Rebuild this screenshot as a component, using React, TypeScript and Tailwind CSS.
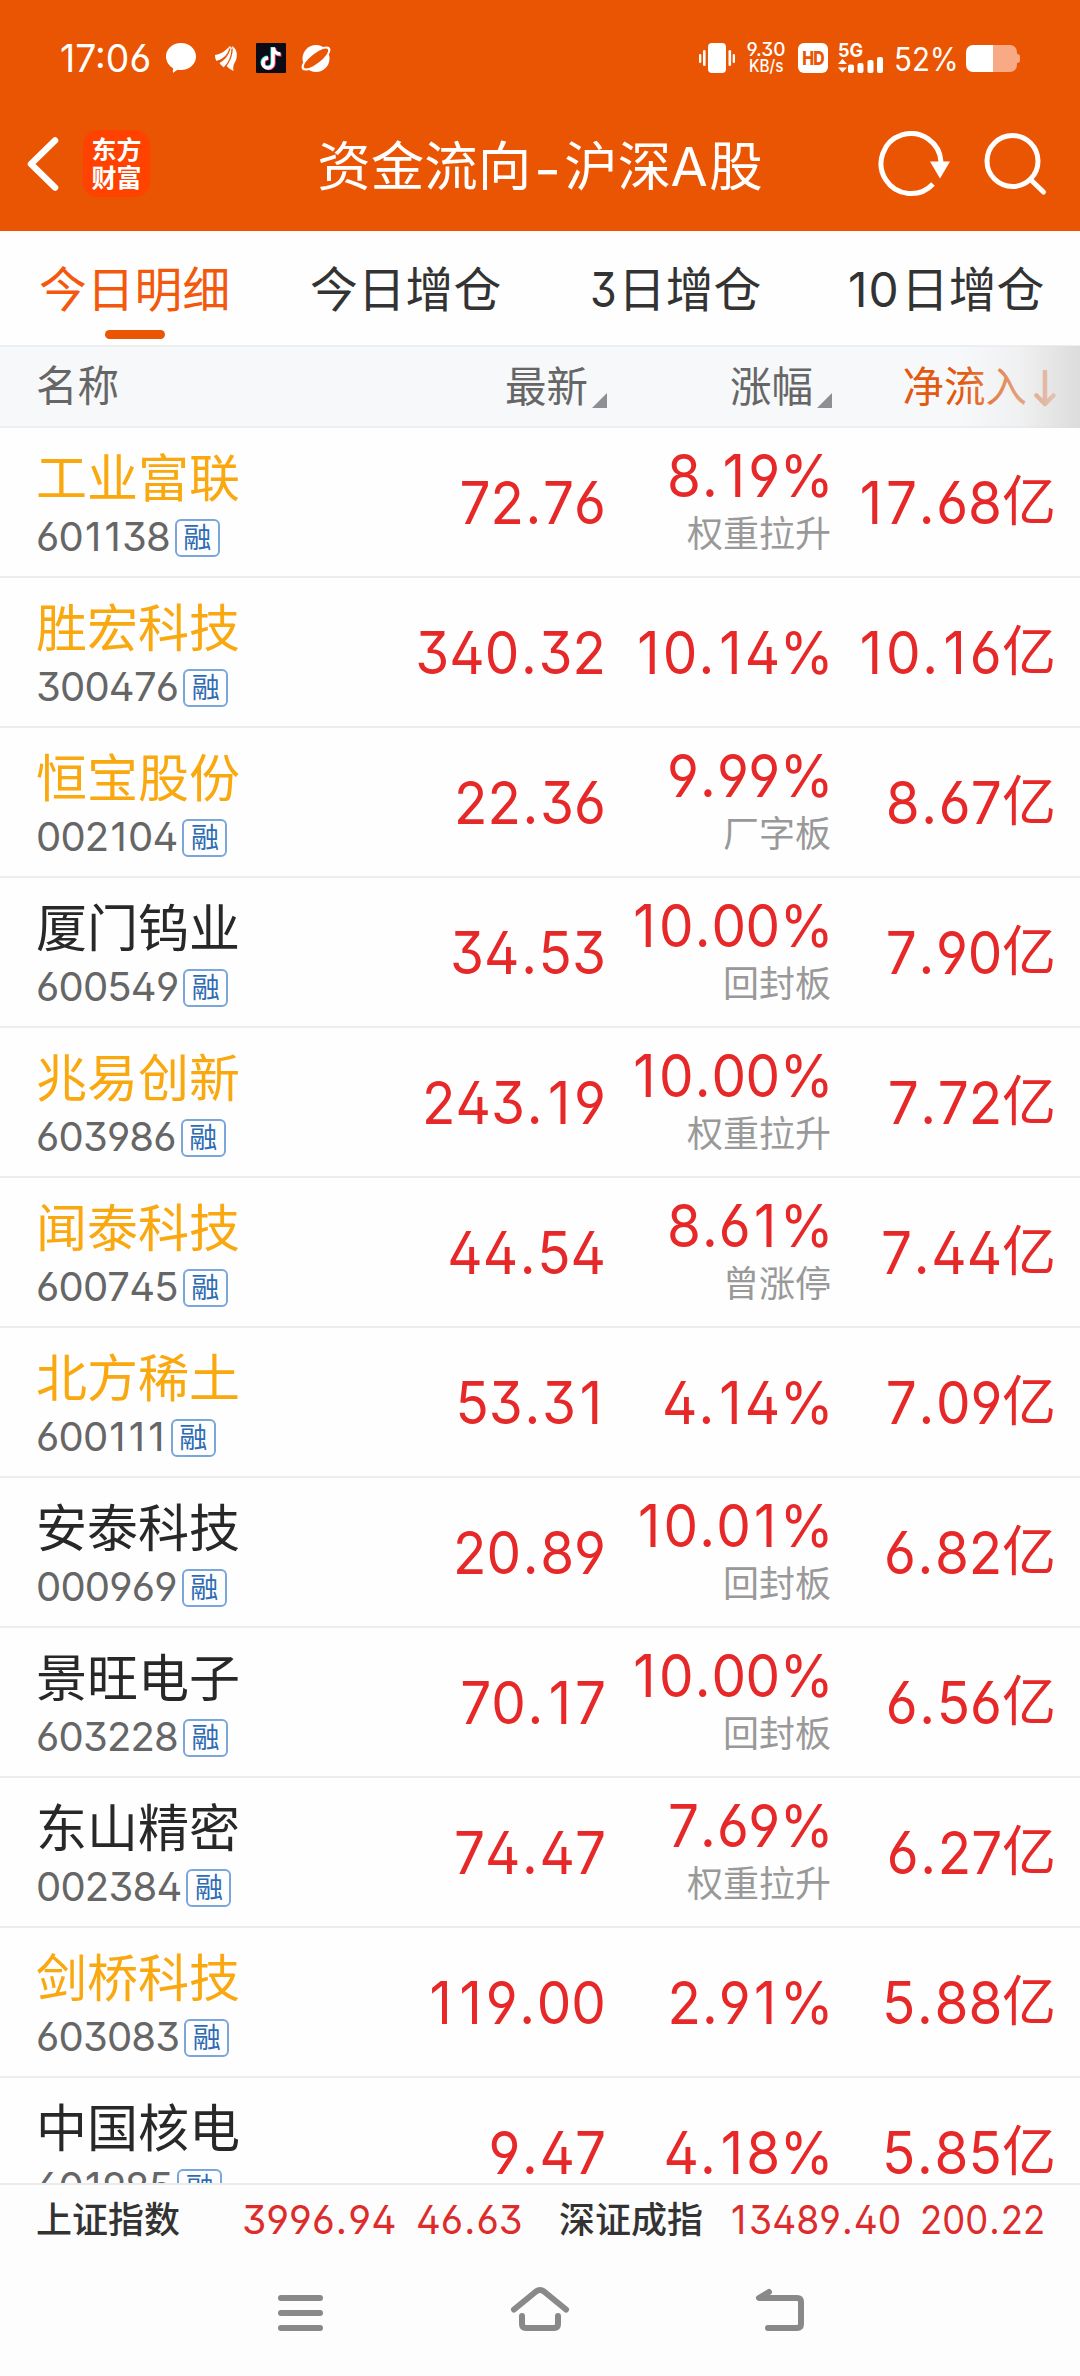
import React from "react";

const FONT = "font-['Inter','Noto_Sans_CJK_SC',sans-serif]";

type Stock = {
  name: string;
  code: string;
  hot?: boolean;
  price: string;
  change: string;
  tag?: string;
  inflow: string;
};

const stocks: Stock[] = [
  { name: "工业富联", code: "601138", hot: true, price: "72.76", change: "8.19%", tag: "权重拉升", inflow: "17.68" },
  { name: "胜宏科技", code: "300476", hot: true, price: "340.32", change: "10.14%", inflow: "10.16" },
  { name: "恒宝股份", code: "002104", hot: true, price: "22.36", change: "9.99%", tag: "厂字板", inflow: "8.67" },
  { name: "厦门钨业", code: "600549", price: "34.53", change: "10.00%", tag: "回封板", inflow: "7.90" },
  { name: "兆易创新", code: "603986", hot: true, price: "243.19", change: "10.00%", tag: "权重拉升", inflow: "7.72" },
  { name: "闻泰科技", code: "600745", hot: true, price: "44.54", change: "8.61%", tag: "曾涨停", inflow: "7.44" },
  { name: "北方稀土", code: "600111", hot: true, price: "53.31", change: "4.14%", inflow: "7.09" },
  { name: "安泰科技", code: "000969", price: "20.89", change: "10.01%", tag: "回封板", inflow: "6.82" },
  { name: "景旺电子", code: "603228", price: "70.17", change: "10.00%", tag: "回封板", inflow: "6.56" },
  { name: "东山精密", code: "002384", price: "74.47", change: "7.69%", tag: "权重拉升", inflow: "6.27" },
  { name: "剑桥科技", code: "603083", hot: true, price: "119.00", change: "2.91%", inflow: "5.88" },
  { name: "中国核电", code: "601985", price: "9.47", change: "4.18%", inflow: "5.85" },
];

// Figures with extra air around the narrow "1" and the decimal point.
function Num({ value, className, one = "mx-[0.07em]" }: { value: string; className: string; one?: string }) {
  return (
    <span className={`whitespace-nowrap [font-kerning:none] ${className}`}>
      {value.split(/([1.])/).map((part, i) =>
        part === "1" ? (
          <span key={i} className={one}>1</span>
        ) : part === "." ? (
          <span key={i} className="mx-[0.03em]">.</span>
        ) : (
          part
        ),
      )}
    </span>
  );
}

function StatusBar() {
  return (
    <div className="flex h-[116px] items-center pl-[60px] pr-[60px] text-white">
      <span className="w-[106px] origin-left scale-x-[0.97] text-[38.5px] leading-none whitespace-nowrap">17:06</span>
      <svg className="-ml-px h-[30px] w-[172px] shrink-0" viewBox="165 43 172 30" fill="#fff">
        <path d="M181 43c8.500 0 15 6 15 13.600S189.500 70 181 70c-1.200 0-2.300-.1-3.400-.3-1.500 1-3 2-4.600 3.300-.3-1.600-.2-3 .2-4.600C169 66 166 61.600 166 56.600 166 49 172.500 43 181 43z" />
        <path d="M215 55c7-1 11-5 15-9 .5 7-5 14-13.500 15-1-1.500-1.500-3.500-1.500-6z" />
        <path d="M219.500 63c7-3.500 10-10 11-17 4 4 .5 16-6.500 21.500-1.500-1-3.500-2.800-4.500-4.500z" />
        <path d="M226 65c5-5 7.500-12 6-19 6 3 6 12 2.500 17-1.500 3-1.500 5-1 8-3-1.500-6-3.500-7.500-6z" />
        <path d="M217 61.500c6-1.500 11-6 13-13M224 68c5-5 8-11 8-19" fill="none" stroke="#ea5504" strokeWidth="1.200" />
        <rect x="256" y="43" width="30" height="30" rx="1" fill="#0b0b16" />
        <path d="M272.500 47v15.500a5 5 0 1 1-5-5M273 47c0 4 3 7 7 7" fill="none" stroke="#25f4ee" strokeWidth="4" />
        <path d="M274 48v15.500a5 5 0 1 1-5-5M274.500 48c0 4 3 7 7 7" fill="none" stroke="#fe2c55" strokeWidth="3.500" />
        <path d="M273 47.500V63a5 5 0 1 1-5-5M273.500 47.500c0 4 3 6.500 7 6.500" fill="none" stroke="#fff" strokeWidth="3.500" />
        <circle cx="316" cy="58.500" r="13.500" />
        <ellipse cx="316" cy="58.500" rx="17.500" ry="6.800" transform="rotate(-38 316 58.500)" />
        <ellipse cx="316" cy="58.500" rx="15" ry="4.800" transform="rotate(-38 316 58.500)" fill="#ea5504" />
      </svg>
      <div className="flex-1" />
      <svg className="h-[30px] w-[37px] shrink-0" viewBox="698 43 37 30" fill="#fff">
        <rect x="707" y="43" width="18" height="30" rx="4" />
        <rect x="702" y="50" width="2.600" height="16" rx="1.300" />
        <rect x="698" y="54" width="2.300" height="9" rx="1.100" />
        <rect x="727.500" y="50" width="2.600" height="16" rx="1.300" />
        <rect x="731.700" y="54" width="2.300" height="9" rx="1.100" />
      </svg>
      <div className="ml-2.5 flex w-[40px] flex-col items-center text-[19px] font-medium leading-[16px]">
        <span>9.30</span>
        <span className="text-[17px] scale-x-90">KB/s</span>
      </div>
      <div className="ml-3 flex h-[30px] w-[30px] items-center justify-center rounded-[6px] bg-white text-[19px] font-extrabold leading-none tracking-[-1px] text-[#ea5504]">
        <span className="scale-x-[0.83]">HD</span>
      </div>
      <div className="relative ml-2.5 h-[30px] w-[46px]">
        <span className="absolute -top-px left-0 origin-left scale-x-[0.95] text-[19px] font-bold leading-[18px]">5G</span>
        <svg className="absolute inset-0 h-[30px] w-[46px]" viewBox="838 43 46 30" fill="#fff">
          <path d="M842.500 59l4.500 5h-9zM842.500 72.500l4.500-5h-9z" />
          <rect x="848" y="64.500" width="6" height="8.500" rx="2" />
          <rect x="857.500" y="63" width="6" height="10" rx="2" />
          <rect x="867.500" y="60" width="6" height="13" rx="2" />
          <rect x="877" y="57" width="6" height="16" rx="2" />
        </svg>
      </div>
      <span className="ml-[10px] w-[63px] origin-left scale-x-[0.92] translate-y-0.5 text-[32px] leading-none whitespace-nowrap">52%</span>
      <svg className="ml-[9px] h-[27px] w-[54px] shrink-0" viewBox="966 46 54 27">
        <path d="M993 46h17a7 7 0 0 1 7 7v13a7 7 0 0 1-7 7h-17zM1017 55c2 0 3 1 3 2.500v4c0 1.500-1 2.500-3 2.500z" fill="#f7aa83" />
        <path d="M993 46h-20a7 7 0 0 0-7 7v13a7 7 0 0 0 7 7h20z" fill="#fff" />
      </svg>
    </div>
  );
}

function TitleBar() {
  return (
    <div className="relative flex h-[115px] items-start px-[27px] pt-[14px] text-white">
      <svg className="mt-[6px] h-[56px] w-[34px]" viewBox="0 0 34 56" fill="none" stroke="#fff" strokeWidth="6.500" strokeLinecap="round" strokeLinejoin="round">
        <path d="M28 4.500 4 28l24 23.500" />
      </svg>
      <div className="ml-[22px] flex h-[67px] w-[67px] flex-col items-center justify-center rounded-[15px] bg-[#ff4200] text-[25px] font-bold leading-[28px]">
        <span>东方</span>
        <span>财富</span>
      </div>
      <h1 className="absolute left-0 top-[17px] w-full text-center text-[53.5px] font-normal leading-[67px]">
        资金流向<span className="inline-block w-[33px] translate-y-[3px] scale-x-110">-</span>沪深<span className="inline-block w-[38px] -translate-x-px text-[54px]">A</span>股
      </h1>
      <div className="flex-1" />
      <svg className="mt-px mr-[5px] h-[68px] w-[170px]" viewBox="876 130 170 68" fill="none" stroke="#fff" strokeWidth="5">
        <path d="M931 183a30 30 0 1 1 8-22" />
        <path d="M928 160.500h20l-10 17z" fill="#fff" stroke="none" />
        <circle cx="1010.500" cy="160" r="25.500" />
        <path d="M1029 179l12.500 12" strokeLinecap="round" />
      </svg>
    </div>
  );
}

function Tabs() {
  return (
    <nav className="flex h-[114px] pt-[35px] pl-[39px] text-[47.8px] leading-[48px] text-[#333]">
      <div className="flex w-[271px] flex-col text-[#f2590c]">
        今日明细
        <span className="ml-[66px] mt-[16px] h-[9px] w-[60px] rounded-full bg-[#ea5504]" />
      </div>
      <div className="w-[280px]">今日增仓</div>
      <div className="w-[258px] whitespace-nowrap"><span className="inline-block w-[28px] origin-left scale-x-90">3</span>日增仓</div>
      <div className="whitespace-nowrap"><span className="inline-block w-[53px] origin-left tracking-[1px]">10</span>日增仓</div>
    </nav>
  );
}

function Corner() {
  return (
    <svg className="mb-[3px] ml-[4px] h-[15px] w-[15px]" viewBox="0 0 15 15">
      <path d="M15 0v15H0z" fill="#8e8e93" />
    </svg>
  );
}

function TableHead() {
  return (
    <div className="relative flex h-[83px] items-center border-y-2 border-[#eceef0] bg-[#f7f8fa] pl-[36px] text-[41.5px] leading-[48px] text-[#666]">
      <div className="w-[300px] -translate-y-px">名称</div>
      <div className="flex w-[271px] items-end justify-end">最新<Corner /></div>
      <div className="flex w-[225px] items-end justify-end">涨幅<Corner /></div>
      <div className="flex w-[224px] items-center justify-end text-[#e2590f]">
        净流入
        <svg className="ml-[7px] mt-1 h-[37px] w-[22px]" viewBox="0 0 22 37" fill="none" stroke="#e2590f" strokeWidth="4.500" strokeLinecap="round" strokeLinejoin="round">
          <path d="M11 1v33M2.500 25.500 11 34l8.500-8.500" />
        </svg>
      </div>
      <div className="absolute -top-px right-0 h-[82px] w-[120px] bg-linear-to-r from-[#f7f8fa]/0 via-[#e9e9e9]/50 to-[#dcdcdc]" />
    </div>
  );
}

const big = "block origin-right scale-x-[0.93] text-[59px] leading-[60px]";

function Row({ s }: { s: Stock }) {
  return (
    <div className="flex h-[150px] shrink-0 border-b-2 border-[#ededed] pl-[36px] text-[#e62828]">
      <div className="w-[300px] pt-[21px]">
        <div className={`text-[51px] leading-[60px] ${s.hot ? "text-[#f9a80f]" : "text-[#282828]"}`}>{s.name}</div>
        <div className="mt-[7px] flex items-center">
          <Num value={s.code} one="mx-[0.05em]" className="tracking-[-0.8px] text-[40px] leading-[40px] text-[#666]" />
          <span className="ml-[5px] mt-[3px] flex h-[38px] w-[45px] items-center justify-center rounded-[6px] border-2 border-[#7ba6d9] text-[28px] leading-none text-[#2d6cb4]">融</span>
        </div>
      </div>
      <div className="w-[270px] pt-[45px] text-right"><Num value={s.price} className={big} /></div>
      <div className={`w-[225px] text-right ${s.tag ? "pt-[18px]" : "pt-[45px]"}`}>
        <Num value={s.change} className={`${big} translate-x-[2px] tracking-[-0.6px]`} />
        {s.tag && <div className="mt-[7px] text-[36px] leading-[42px] text-[#999]">{s.tag}</div>}
      </div>
      <div className="flex w-[225px] justify-end pt-[45px]">
        <Num value={s.inflow} className={big} />
        <span className="text-[54px] leading-[58px]">亿</span>
      </div>
    </div>
  );
}

function IndexBar() {
  return (
    <div className="flex h-[68px] shrink-0 items-center border-t-2 border-[#ebebeb] bg-[#fdfdfd] pt-[3px] pl-[36px] text-[36px] leading-[48px] text-[#333]">
      <span className="w-[206px] font-medium">上证指数</span>
      <Num value="3996.94" className="w-[174px] origin-left scale-x-[0.98] text-[40px] text-[#dc2c2c]" />
      <Num value="46.63" className="w-[143px] origin-left scale-x-[0.96] text-[40px] text-[#dc2c2c]" />
      <span className="w-[172px] font-medium">深证成指</span>
      <Num value="13489.40" one="mr-[0.08em]" className="w-[189px] origin-left scale-x-[0.93] text-[40px] text-[#dc2c2c]" />
      <Num value="200.22" className="w-[130px] origin-left scale-x-[0.91] text-[40px] text-[#dc2c2c]" />
    </div>
  );
}

function NavBar() {
  return (
    <div className="flex flex-1 items-start justify-center gap-[179px] bg-[#fdfdfd] pt-[34px]">
      <svg className="h-[50px] w-[60px]" viewBox="270 2285 60 50" fill="none" stroke="#898989" strokeWidth="6" strokeLinecap="round">
        <path d="M280 2298h39M280 2313h39M280 2328h39" />
      </svg>
      <svg className="h-[50px] w-[60px]" viewBox="510 2285 60 50" fill="none" stroke="#898989" strokeWidth="6" strokeLinecap="round" strokeLinejoin="round">
        <path d="M514 2309.500 536 2291.500q4-3 8 0l22 18M522 2316v8q0 4 4 4h28q4 0 4-4v-8" />
      </svg>
      <svg className="h-[50px] w-[60px]" viewBox="750 2285 60 50" fill="none" stroke="#898989" strokeWidth="6" strokeLinecap="round" strokeLinejoin="round">
        <path d="M770 2292l-10 6h38q4 0 4 4v22q0 4-4 4h-29" />
      </svg>
    </div>
  );
}

export default function App() {
  return (
    <div className={`flex h-[2376px] w-[1080px] flex-col overflow-hidden bg-[#fefefe] [font-feature-settings:'ss01','cv03','cv04'] ${FONT}`}>
      <header className="h-[231px] shrink-0 bg-[#ea5504]">
        <StatusBar />
        <TitleBar />
      </header>
      <Tabs />
      <TableHead />
      <main className="flex h-[1755px] shrink-0 flex-col overflow-hidden">
        {stocks.map((s) => (
          <Row key={s.code} s={s} />
        ))}
      </main>
      <IndexBar />
      <NavBar />
    </div>
  );
}
